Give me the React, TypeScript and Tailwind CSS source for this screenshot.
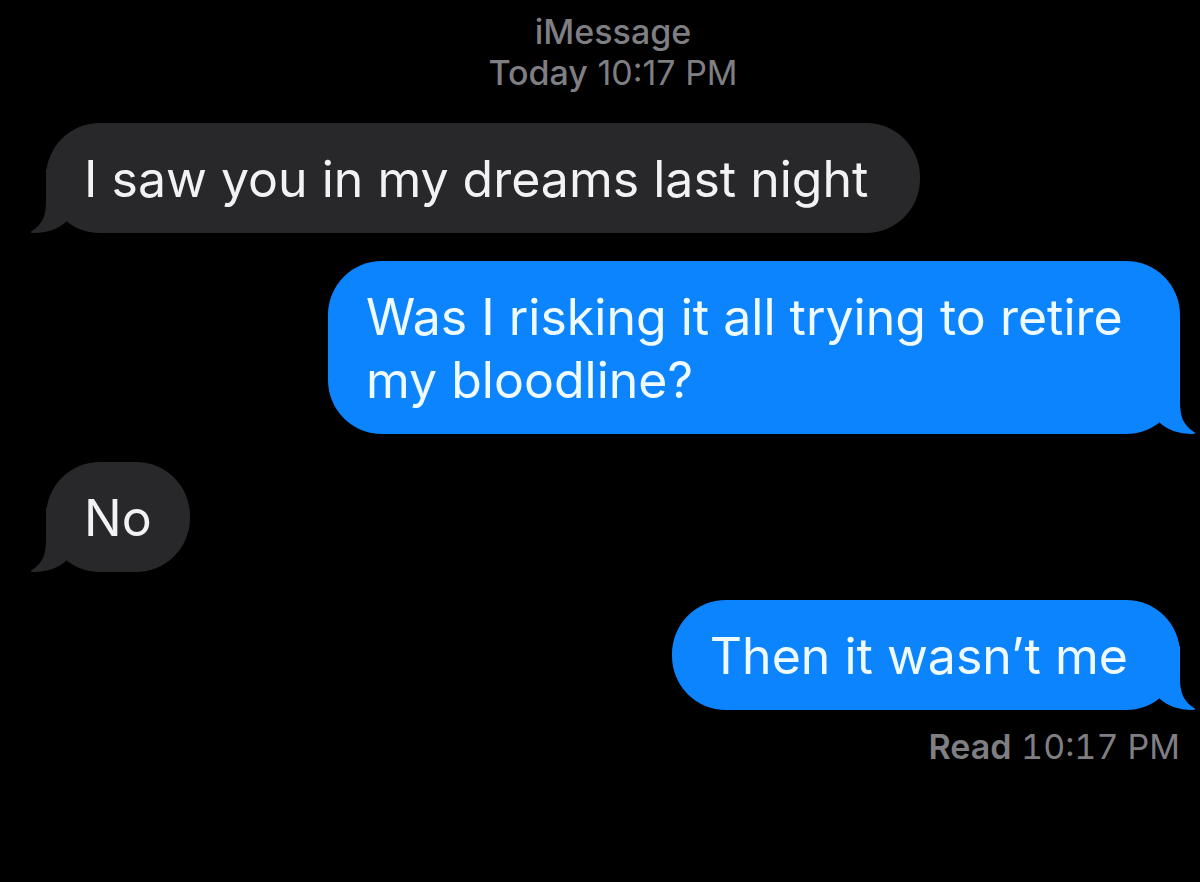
interface Message {
  id: number;
  text: string;
  fromMe: boolean;
}

const messages: Message[] = [
  { id: 1, text: 'I saw you in my dreams last night', fromMe: false },
  { id: 2, text: 'Was I risking it all trying to retire my bloodline?', fromMe: true },
  { id: 3, text: 'No', fromMe: false },
  { id: 4, text: 'Then it wasn’t me', fromMe: true },
];

// Tail drawn for received bubbles, flipped for sent ones
const Tail = ({ fromMe }: { fromMe: boolean }) => (
  <svg
    viewBox="0 0 60 64"
    aria-hidden="true"
    className={
      fromMe
        ? 'absolute bottom-0 -right-4 h-16 w-[60px] -scale-x-100 fill-[#0b84fe]'
        : 'absolute bottom-0 -left-4 h-16 w-[60px] fill-[#28282b]'
    }
  >
    <path d="M16 0 V32 C16 46 13 55 2 62 C0 63 1 64 4 64 C17 64 28 60 36 53 V0 Z" />
  </svg>
);

const Bubble = ({ message }: { message: Message }) => {
  // Single words sit in an evenly padded bubble
  const isWord = !message.text.includes(' ');

  return (
    <li className={message.fromMe ? 'flex justify-end' : 'flex justify-start'}>
      <div
        className={`relative max-w-[900px] rounded-[54px] pt-[25px] pb-[22px] pl-[38px] ${
          isWord ? 'pr-[38px]' : 'pr-[52px]'
        } ${message.fromMe ? 'ml-[282px] bg-[#0b84fe] text-[#effaff]' : 'bg-[#28282b] text-[#f2f2f4]'}`}
      >
        <Tail fromMe={message.fromMe} />
        <p className="relative text-[50px] leading-[63px]">{message.text}</p>
      </div>
    </li>
  );
};

export default function App() {
  return (
    <main className="min-h-screen bg-black pt-[11px] pr-5 pb-10 pl-[46px] font-['Inter',sans-serif]">
      <header className="text-center text-[34px] leading-[41px] text-[#7f7f83]">
        <h1 className="font-medium">iMessage</h1>
        <p>
          <span className="font-medium">Today</span> <time>10:17 PM</time>
        </p>
      </header>

      <ul className="mt-[30px] flex flex-col gap-7">
        {messages.map((message) => (
          <Bubble key={message.id} message={message} />
        ))}
      </ul>

      <p className="mt-4 text-right text-[34px] leading-[41px] text-[#7f7f83]">
        <span className="font-semibold">Read</span> <time className="tabular-nums">10:17 PM</time>
      </p>
    </main>
  );
}
